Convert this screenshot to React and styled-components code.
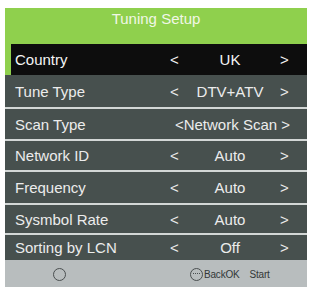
import React from 'react'
import styled, { createGlobalStyle } from 'styled-components'

const GlobalStyle = createGlobalStyle`
    body {
        margin: 0;
        background: #ffffff;
        font-family: "Liberation Sans", Arial, sans-serif;
    }
`

const rows = [
    { label: 'Tune Type', value: 'DTV+ATV', height: 32 },
    { label: 'Scan Type', value: '<Network Scan >', height: 30, wide: true },
    { label: 'Network ID', value: 'Auto', height: 29 },
    { label: 'Frequency', value: 'Auto', height: 31 },
    { label: 'Sysmbol Rate', value: 'Auto', height: 28 },
    { label: 'Sorting by LCN', value: 'Off', height: 25 },
]

const OptionRow = ({ label, value, height, wide }) => (
    <Row $height={height}>
        <Label>{label}</Label>
        {wide ? (
            <WideValue>{value}</WideValue>
        ) : (
            <>
                <Arrow>&lt;</Arrow>
                <Value>{value}</Value>
                <Arrow>&gt;</Arrow>
            </>
        )}
    </Row>
)

const App = () => {
    return (
        <Screen>
            <GlobalStyle />
            <Header>
                <Title>Tuning Setup</Title>
                <Selected>
                    <Label>Country</Label>
                    <Arrow>&lt;</Arrow>
                    <Value>UK</Value>
                    <Arrow>&gt;</Arrow>
                </Selected>
            </Header>
            <List>
                {rows.map((r, i) => (
                    <React.Fragment key={r.label}>
                        {i > 0 && <Divider />}
                        <OptionRow {...r} />
                    </React.Fragment>
                ))}
            </List>
            <Footer>
                <Hint>
                    <Ring />
                </Hint>
                <Hint>
                    <Ring $dash />
                    <HintText>BackOK</HintText>
                    <HintText>Start</HintText>
                </Hint>
            </Footer>
        </Screen>
    )
}

export default App

const Screen = styled.div`
    margin: 8px 2px 0 5px;
    width: 302px;
    display: flex;
    flex-direction: column;
`

const Header = styled.div`
    background: #8fd04d;
    display: flex;
    flex-direction: column;
`

const Title = styled.div`
    height: 36px;
    line-height: 22px;
    text-align: center;
    color: #f1f7e6;
    font-size: 15px;
`

const rowGrid = `
    display: grid;
    grid-template-columns: 1fr 10px 100px 10px;
    align-items: center;
    padding-right: 17px;
    color: #ececec;
    font-size: 15px;
    white-space: nowrap;
`

const Selected = styled.div`
    ${rowGrid}
    margin-left: 6px;
    height: 31px;
    padding-left: 4px;
    background: #0d0d0d;
    color: #f4f4f4;
`

const List = styled.div`
    display: flex;
    flex-direction: column;
    background: #47504e;
`

const Row = styled.div`
    ${rowGrid}
    height: ${p => p.$height}px;
    padding-left: 10px;
`

const Divider = styled.div`
    height: 2px;
    background: #d3d7d6;
`

const Label = styled.span``

const Arrow = styled.span`
    text-align: left;
`

const Value = styled.span`
    text-align: center;
`

const WideValue = styled.span`
    grid-column: 2 / 5;
    text-align: right;
`

const Footer = styled.div`
    height: 28px;
    background: #b8bdbe;
    display: grid;
    grid-template-columns: 185px 1fr;
    align-items: center;
`

const Hint = styled.div`
    display: flex;
    align-items: center;
    gap: 1px;
    padding-left: 48px;

    & + & {
        padding-left: 0;
    }
`

const Ring = styled.span`
    position: relative;
    width: 11px;
    height: 11px;
    border: 1.5px solid #4a4f50;
    border-radius: 50%;

    &::after {
        content: '';
        display: ${p => (p.$dash ? 'block' : 'none')};
        position: absolute;
        left: 2px;
        right: 2px;
        top: 4.5px;
        border-top: 1px dotted #4a4f50;
    }
`

const HintText = styled.span`
    font-size: 10px;
    letter-spacing: -0.2px;
    color: #333838;
    margin-right: 9px;
`
